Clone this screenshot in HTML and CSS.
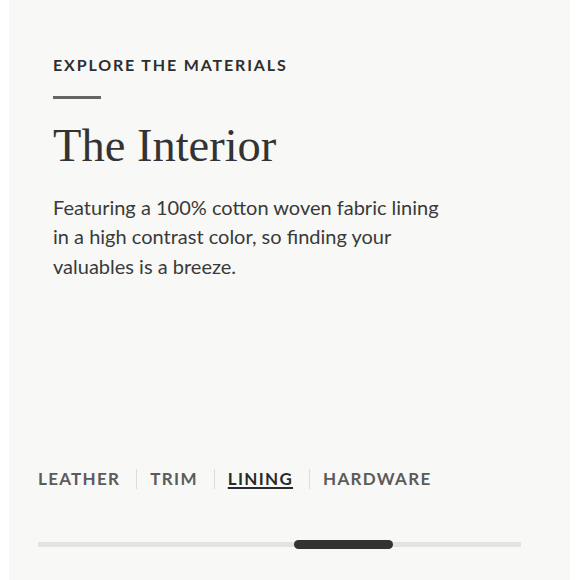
FILE: index.html
```html
<!DOCTYPE html>
<html lang="en">
<head>
<meta charset="utf-8">
<title>The Interior</title>
<link rel="stylesheet" href="styles.css">
</head>
<body>
  <section class="panel">
    <p class="eyebrow">EXPLORE THE MATERIALS</p>
    <hr class="rule">
    <h1 class="title">The Interior</h1>
    <p class="copy">Featuring a 100% cotton woven fabric lining in a high contrast color, so finding your valuables is a breeze.</p>

    <nav class="tabs">
      <a class="tab">LEATHER</a>
      <span class="sep"></span>
      <a class="tab">TRIM</a>
      <span class="sep"></span>
      <a class="tab is-active">LINING</a>
      <span class="sep"></span>
      <a class="tab">HARDWARE</a>
    </nav>

    <div class="scroller">
      <div class="track"></div>
      <div class="thumb"></div>
    </div>
  </section>
</body>
</html>
```
FILE: styles.css
```css
html, body {
  margin: 0;
  padding: 0;
  background: #ffffff;
}

.panel {
  box-sizing: border-box;
  margin: 0 10px 0 9px;
  height: 580px;
  background: #f8f8f6;
  display: flex;
  flex-direction: column;
  padding: 55px 0 31px 44px;
  font-family: Lato, "Noto Sans", sans-serif;
  color: #333333;
}

.eyebrow {
  margin: 0;
  font-size: 16px;
  line-height: 20px;
  font-weight: 700;
  letter-spacing: 1.85px;
  color: #2e2e2e;
}

.rule {
  margin: 21px 0 0;
  width: 48px;
  height: 3px;
  border: 0;
  background: #666666;
}

.title {
  margin: 21.5px 0 0;
  font-family: "Liberation Serif", "DejaVu Serif", serif;
  font-weight: 400;
  font-size: 46.5px;
  line-height: 50px;
  color: #333333;
}

.copy {
  margin: 22px 0 0;
  max-width: 400px;
  font-size: 20px;
  line-height: 29.5px;
  color: #3a3a3a;
}

.tabs {
  margin-top: auto;
  margin-left: -15px;
  display: flex;
  align-items: center;
}

.tab {
  font-size: 17px;
  line-height: 24px;
  font-weight: 700;
  letter-spacing: 1.3px;
  color: #5b5b5b;
  cursor: pointer;
}

.tab.is-active {
  color: #2a2a2a;
  text-decoration: underline;
  text-decoration-thickness: 2px;
  text-underline-offset: 2px;
}

.sep {
  width: 1px;
  height: 20px;
  margin: 0 13px 0 16px;
  background: #dcdcd8;
}

.scroller {
  position: relative;
  margin: 49px 0 0 -15px;
  width: 483px;
  height: 9px;
}

.track {
  margin-top: 2px;
  height: 5px;
  background: #e3e3df;
}

.thumb {
  position: absolute;
  top: 0;
  left: 256px;
  width: 99px;
  height: 9px;
  border-radius: 5px;
  background: #333333;
}
```
